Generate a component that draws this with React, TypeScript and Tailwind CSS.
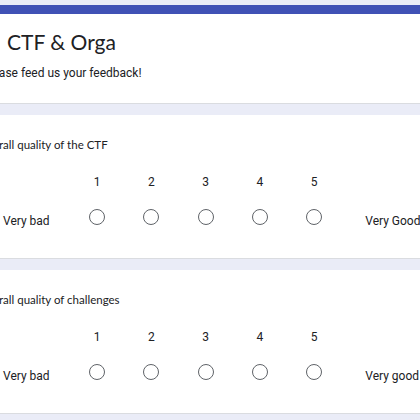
const scale = [1, 2, 3, 4, 5]

function Radio() {
  return <div className="h-4 w-4 rounded-full border-[1.5px] border-[#5f6368]" />
}

interface ScaleCardProps {
  title: string
  low: string
  high: string
}

function ScaleCard({ title, low, high }: ScaleCardProps) {
  return (
    <div className="bg-white border-b border-[#dadce0] pt-[22px] pb-[29px]">
      <div className="-ml-[22px] text-[11.5px] leading-4 text-[#202124] font-['Lato',sans-serif] whitespace-nowrap">
        {title}
      </div>
      <div className="flex mt-[21px] font-['Roboto',sans-serif] text-[12px] leading-4 text-[#202124]">
        <div className="w-[70px] shrink-0" />
        {scale.map((n) => (
          <div key={n} className="w-[54.25px] shrink-0 text-center">
            {n}
          </div>
        ))}
      </div>
      <div className="flex items-end h-6 mt-[15px] font-['Roboto',sans-serif] text-[12px] leading-4 text-[#202124]">
        <div className="w-[70px] shrink-0 pl-[3px]">{low}</div>
        {scale.map((n) => (
          <div key={n} className="w-[54.25px] shrink-0 h-6 flex items-center justify-center">
            <Radio />
          </div>
        ))}
        <div className="pl-[24px] whitespace-nowrap">{high}</div>
      </div>
    </div>
  )
}

export default function App() {
  return (
    <div className="w-[420px] h-[420px] overflow-hidden bg-[#eaecf7] pt-[5px]">
      <div className="flex flex-col gap-[11px]">
        <div className="bg-white border-b border-[#dadce0]">
          <div className="h-[9px] bg-[#4051b5]" />
          <div className="pt-[12px] pb-[22px]">
            <div className="pl-[7px] text-[21px] leading-8 text-[#202124] font-['Lato',sans-serif]">
              CTF &amp; Orga
            </div>
            <div className="-ml-[18px] mt-[7px] text-[12px] leading-4 text-[#202124] font-['Roboto',sans-serif] whitespace-nowrap">
              Please feed us your feedback!
            </div>
          </div>
        </div>
        <ScaleCard title="Overall quality of the CTF" low="Very bad" high="Very Good" />
        <ScaleCard title="Overall quality of challenges" low="Very bad" high="Very good" />
      </div>
    </div>
  )
}
